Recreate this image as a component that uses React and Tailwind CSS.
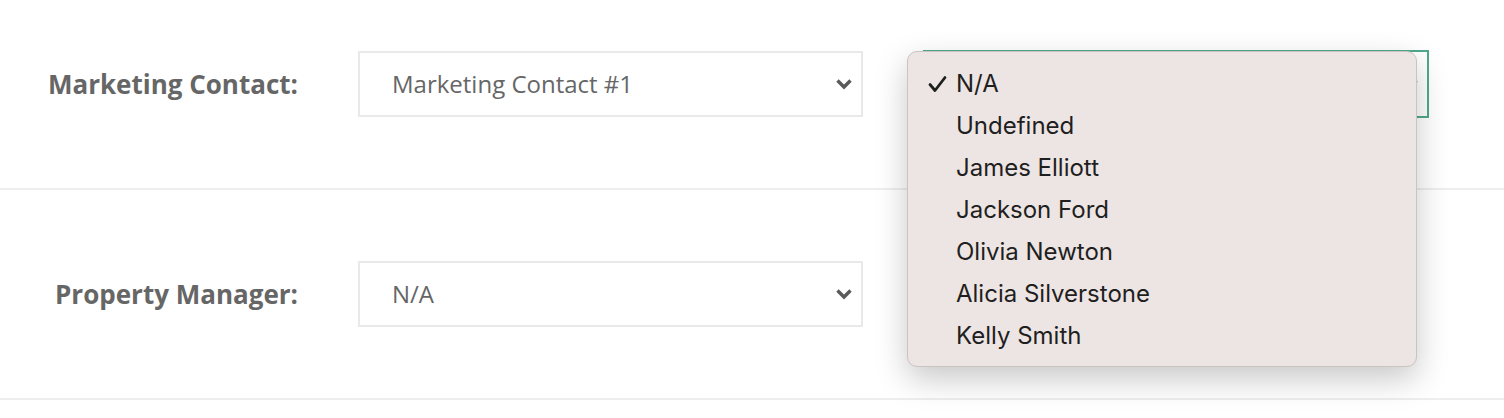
import React from "react";

function Chevron({ className = "" }) {
  return (
    <svg className={className} width="18" height="12" viewBox="0 0 18 12" fill="none">
      <polyline points="2.5,2.5 9,9 15.5,2.5" stroke="#5a5a5a" strokeWidth="3.4" strokeLinecap="butt" strokeLinejoin="miter" />
    </svg>
  );
}

function Select({ value, focused = false }) {
  return (
    <div
      className={
        "relative flex items-center bg-white " +
        (focused
          ? "w-[506px] h-[68px] border-2 border-[#4fa98d]"
          : "w-[505px] h-[66px] border-2 border-[#e9e9e9]")
      }
    >
      <span className="pl-[32px] text-[24px] text-[#666666] font-['Open_Sans',sans-serif]">{value}</span>
      <Chevron className="absolute right-[8px] top-1/2 -translate-y-1/2" />
    </div>
  );
}

const items = ["N/A", "Undefined", "James Elliott", "Jackson Ford", "Olivia Newton", "Alicia Silverstone", "Kelly Smith"];

export default function App() {
  return (
    <div className="relative w-[1504px] h-[418px] bg-white overflow-hidden font-['Open_Sans',sans-serif]">
      <div className="flex items-center pt-[51px] pb-[71px] border-b-2 border-[#eeeeee] h-[190px]">
        <div className="w-[298px] text-right text-[26px] font-bold text-[#666666] leading-none">Marketing Contact:</div>
        <div className="ml-[60px]">
          <Select value="Marketing Contact #1" />
        </div>
        <div className="ml-[60px]">
          <Select value="N/A" focused />
        </div>
      </div>
      <div className="flex items-center pt-[71px] pb-[71px] border-b-2 border-[#eeeeee] h-[210px]">
        <div className="w-[298px] text-right text-[26px] font-bold text-[#666666] leading-none">Property Manager:</div>
        <div className="ml-[60px]">
          <Select value="N/A" />
        </div>
      </div>

      <div className="absolute left-[907px] top-[51px] w-[510px] h-[316px] rounded-[10px] bg-[#ede5e3] border border-[#c9c3c1] shadow-[0_12px_32px_rgba(0,0,0,0.22)] pt-[11px] font-['Inter',sans-serif]">
        {items.map((it, i) => (
          <div key={it} className="relative h-[42px] flex items-center pl-[48px] text-[24px] text-[#1f1f1f]">
            {i === 0 && (
              <svg className="absolute left-[20px] top-1/2 -translate-y-1/2" width="19" height="17" viewBox="0 0 19 17" fill="none">
                <polyline points="2,9 7,15 17,2" stroke="#1f1f1f" strokeWidth="2.8" strokeLinecap="round" strokeLinejoin="round" />
              </svg>
            )}
            {it}
          </div>
        ))}
      </div>
    </div>
  );
}
